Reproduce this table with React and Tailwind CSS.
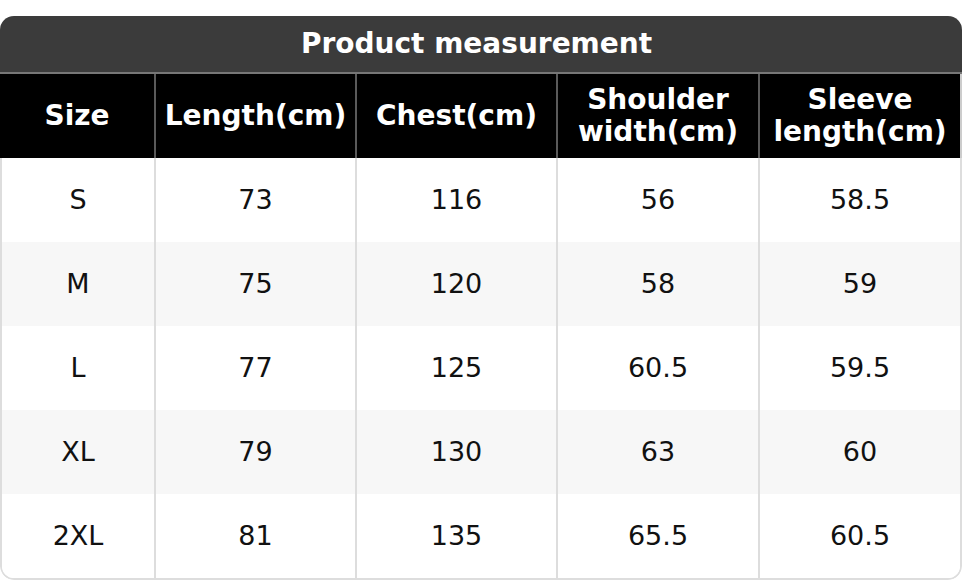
import React from "react";

const headers = [
  ["Size"],
  ["Length(cm)"],
  ["Chest(cm)"],
  ["Shoulder", "width(cm)"],
  ["Sleeve", "length(cm)"],
];

const rows = [
  ["S", "73", "116", "56", "58.5"],
  ["M", "75", "120", "58", "59"],
  ["L", "77", "125", "60.5", "59.5"],
  ["XL", "79", "130", "63", "60"],
  ["2XL", "81", "135", "65.5", "60.5"],
];

const App = () => {
  return (
    <div className="w-[962px] h-[580px] bg-white pt-[16px] font-['DejaVu_Sans',sans-serif]">
      <div className="rounded-[14px] overflow-hidden">
        {/* Title */}
        <div className="h-[58px] bg-[#3b3b3b] border-b-2 border-[#777] flex items-center justify-center pr-[9px]">
          <span className="text-white font-bold text-[28px] leading-none">Product measurement</span>
        </div>

        {/* Header row */}
        <div className="grid grid-cols-[156px_201px_201px_202px_1fr] bg-black h-[84px]">
          {headers.map((h, i) => (
            <div
              key={i}
              className={`flex flex-col items-center justify-center text-white font-bold text-[28px] leading-[32px] ${
                i < headers.length - 1 ? "border-r-2 border-[#5a5a5a]" : "border-r-2 border-[#ccc]"
              }`}
            >
              {h.map((line, j) => (
                <span key={j}>{line}</span>
              ))}
            </div>
          ))}
        </div>

        {/* Body */}
        <div className="border-x-2 border-b-2 border-[#ddd] rounded-b-[14px] overflow-hidden">
          {rows.map((r, ri) => (
            <div
              key={ri}
              className={`grid grid-cols-[154px_201px_201px_202px_1fr] h-[84px] ${ri % 2 === 1 ? "bg-[#f7f7f7]" : "bg-white"}`}
            >
              {r.map((c, ci) => (
                <div
                  key={ci}
                  className={`flex items-center justify-center text-[#111] text-[27px] ${
                    ci < r.length - 1 ? "border-r-2 border-[#ddd]" : ""
                  }`}
                >
                  {c}
                </div>
              ))}
            </div>
          ))}
        </div>
      </div>
    </div>
  );
};

export default App;
